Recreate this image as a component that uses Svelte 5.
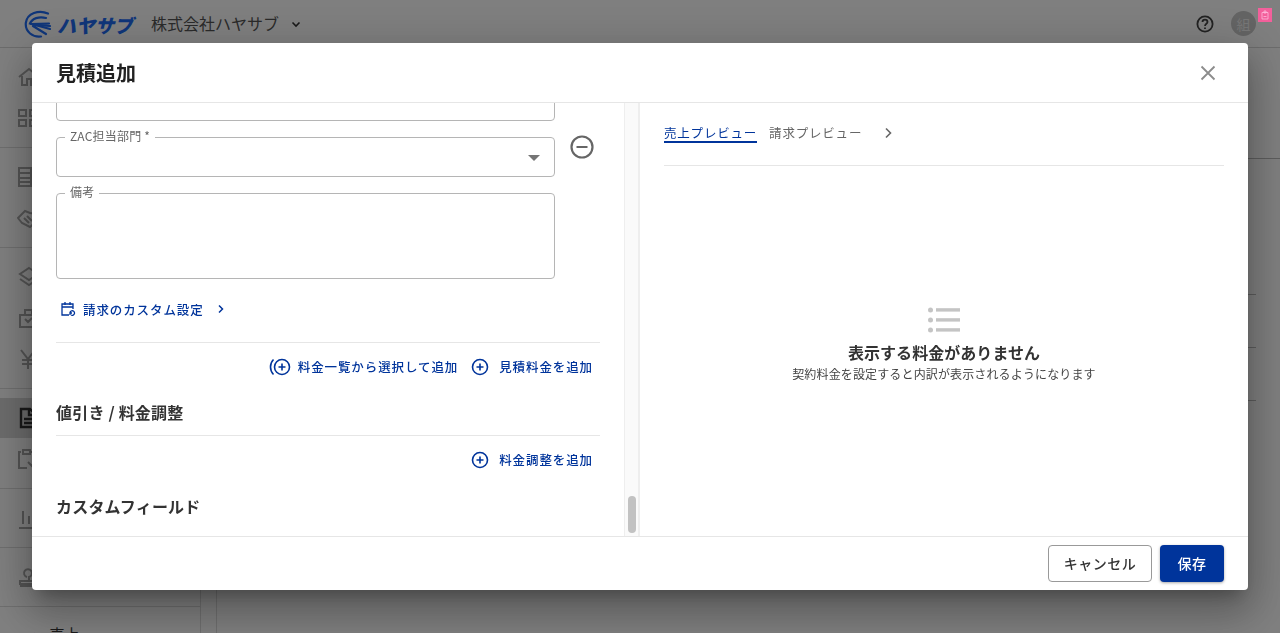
<script>
  let nav_groups = [
    ['home', 'grid'],
    ['building', 'hands'],
    ['layers', 'bag', 'yen'],
    ['doc', 'clip'],
    ['chart'],
    ['stamp'],
  ];
</script>

<div class="page">
  <header class="topbar">
    <div class="logo">
      <svg width="27" height="28" viewBox="0 0 27 28" fill="none" stroke="#1f6cf5" stroke-width="2.200" stroke-linecap="round">
        <path d="M24 3.500C15 -0.500 3 3 1.800 13C1 22 9 27.500 17 26.500"/>
        <path d="M22 8C15 6 8 8.500 6 13.500L26 19"/>
        <path d="M7 14L25 13.500M9 16L22 24M11 15L26 16"/>
      </svg>
      <span class="logo-name">ハヤサブ</span>
    </div>
    <span class="company">株式会社ハヤサブ</span>
    <svg class="caret" width="12" height="12" viewBox="0 0 12 12" fill="none" stroke="#333" stroke-width="1.600"><path d="M2.500 4.500L6 8l3.500-3.500"/></svg>
    <span class="spacer"></span>
    <svg width="20" height="20" viewBox="0 0 20 20" fill="none" stroke="#444" stroke-width="1.800">
      <circle cx="10" cy="10" r="7.600"/>
      <path d="M7.500 8C7.500 4.800 12.500 4.800 12.500 8C12.500 9.800 10 9.800 10 12"/>
      <path d="M10 13.500v1.500"/>
    </svg>
    <span class="avatar">組</span>
  </header>

  <div class="under">
    <aside class="side">
      {#each nav_groups as group}
        <div class="group">
          {#each group as item}
            <div class="nav" class:on={item === 'doc'}>
              <svg width="24" height="24" viewBox="0 0 24 24" fill="none" stroke="#a8a8a8" stroke-width="2">
                {#if item === 'home'}<path d="M2 12L12 4l10 8M5 11v9h5v-6h4v6h5v-9"/>
                {:else if item === 'grid'}<path d="M2 4h7v6H2zM13 4h7v6h-7zM2 14h7v6H2zM13 14h7v6h-7z"/>
                {:else if item === 'building'}<path d="M2 3h12v18H2zM14 9h7v12h-7zM2 8h12M2 13h12M2 17h12"/>
                {:else if item === 'hands'}<path d="M1 12l7-7 5 2 7 1v7l-7 6-8-4zM7 12l5 5M10 10l5 5"/>
                {:else if item === 'layers'}<path d="M12 3l9 6-9 6-9-6zM3 14l9 6 9-6"/>
                {:else if item === 'bag'}<path d="M3 9h17v12H3zM8 9V4h7v5M8 13l3 3 4-4"/>
                {:else if item === 'yen'}<path d="M4 3l7 9 7-9M11 12v10M5 13h12M5 17h12"/>
                {:else if item === 'doc'}<path stroke="#333" stroke-width="2.400" d="M4 3h9l5 5v13H4zM12 3v6h6M7 13h9M7 17h9"/>
                {:else if item === 'clip'}<path d="M4 5H2v16h8M14 5h3v8M6 3h7v4H6zM11 15l4 4 4-4"/>
                {:else if item === 'chart'}<path d="M2 22h18M6 18V5M12 18v-8M18 18v-5"/>
                {:else}<path d="M3 21h18M3 16h18v3H3zM12 15v-3a4 4 0 1 0-2 0"/>
                {/if}
              </svg>
            </div>
          {/each}
        </div>
      {/each}
      <div class="nav-label"><span class="tri">›</span>売上</div>
    </aside>
    <main class="content">
      <div class="content-head"></div>
      <div class="content-rows">
        <div class="row"></div>
        <div class="row"></div>
        <div class="row"></div>
      </div>
    </main>
  </div>
</div>

<div class="overlay"></div>
<span class="badge">
  <svg width="10" height="10" viewBox="0 0 10 10" fill="none" stroke="#fbd" stroke-width=".8"><path d="M2 2.500h6V9H2zM4 1h2v2H4zM3.500 6.500h3"/></svg>
</span>

<div class="modal-wrap">
  <section class="modal">
    <div class="modal-head">
      <h1>見積追加</h1>
      <button class="close" aria-label="閉じる">
        <svg width="16" height="16" viewBox="0 0 16 16" fill="none" stroke="#8c8c8c" stroke-width="1.800"><path d="M1.500 1.500l13 13M14.500 1.500l-13 13"/></svg>
      </button>
    </div>

    <div class="modal-body">
      <div class="left">
        <div class="form">
          <div class="field cut"></div>

          <div class="with-remove">
            <div class="field select">
              <span class="label">ZAC担当部門 *</span>
              <span class="arrow"></span>
            </div>
            <svg class="remove" width="26" height="26" viewBox="0 0 26 26" fill="none" stroke="#666" stroke-width="2.200">
              <circle cx="13" cy="13" r="10.500"/><path d="M7.500 13h11"/>
            </svg>
          </div>

          <div class="field memo"><span class="label">備考</span></div>

          <div class="custom">
            <svg width="16" height="16" viewBox="0 0 16 16" fill="none" stroke="#00349b" stroke-width="1.300">
              <path d="M9 14H2V3h11v5M2 6h11M5 1v3M10 1v3"/>
              <path d="M10 11.500a2.300 2.300 0 1 1 1 2.500M10 14v-2h2"/>
            </svg>
            <span>請求のカスタム設定</span>
            <svg class="chev" width="10" height="10" viewBox="0 0 10 10" fill="none" stroke="#00349b" stroke-width="1.500"><path d="M3 1.500L6.500 5 3 8.500"/></svg>
          </div>

          <div class="actions first">
            <span class="act list">
              <svg width="22" height="18" viewBox="0 0 22 18" fill="none" stroke="#00349b" stroke-width="1.600">
                <path d="M4.500 1.500C0.500 5.500 0.500 12.500 4.500 16.500"/>
                <circle cx="13" cy="9" r="7.500"/><path d="M13 5.500v7M9.500 9h7"/>
              </svg>
              料金一覧から選択して追加
            </span>
            <span class="act">
              <svg width="18" height="18" viewBox="0 0 18 18" fill="none" stroke="#00349b" stroke-width="1.600">
                <circle cx="9" cy="9" r="7.500"/><path d="M9 5.500v7M5.500 9h7"/>
              </svg>
              見積料金を追加
            </span>
          </div>

          <h2 class="sect">値引き / 料金調整</h2>
          <div class="actions">
            <span class="act">
              <svg width="18" height="18" viewBox="0 0 18 18" fill="none" stroke="#00349b" stroke-width="1.600">
                <circle cx="9" cy="9" r="7.500"/><path d="M9 5.500v7M5.500 9h7"/>
              </svg>
              料金調整を追加
            </span>
          </div>

          <h2 class="sect last">カスタムフィールド</h2>
        </div>
      </div>

      <div class="track"><span class="thumb"></span></div>

      <div class="right">
        <nav class="tabs">
          <span class="tab active">売上プレビュー</span>
          <span class="tab">請求プレビュー</span>
          <svg class="tab-next" width="12" height="12" viewBox="0 0 12 12" fill="none" stroke="#666" stroke-width="1.600"><path d="M4 1.500L8.500 6 4 10.500"/></svg>
        </nav>
        <div class="empty">
          <svg width="32" height="26" viewBox="0 0 32 26" fill="#c4c4c4">
            <circle cx="2.500" cy="3" r="2.500"/><circle cx="2.500" cy="13" r="2.500"/><circle cx="2.500" cy="23" r="2.500"/>
            <rect x="8" y="1.200" width="24" height="3.400"/><rect x="8" y="11.200" width="24" height="3.400"/><rect x="8" y="21.200" width="24" height="3.400"/>
          </svg>
          <strong>表示する料金がありません</strong>
          <p>契約料金を設定すると内訳が表示されるようになります</p>
        </div>
      </div>
    </div>

    <div class="modal-foot">
      <button class="btn cancel">キャンセル</button>
      <button class="btn save">保存</button>
    </div>
  </section>
</div>

<style>
  :global(body) {
    margin: 0;
    font-family: "Noto Sans CJK JP", "Liberation Sans", sans-serif;
    color: #333;
    overflow: hidden;
  }

  .page { height: 633px; overflow: hidden; background: #fff; isolation: isolate; }

  .topbar {
    height: 47px;
    display: flex;
    align-items: center;
    padding: 0 8px 0 24px;
    border-bottom: 1px solid #d8d8d8;
    box-sizing: content-box;
  }
  .logo { display: flex; align-items: center; width: 127px; margin-top: 1px; }
  .logo-name {
    font-size: 19px;
    font-weight: 900;
    font-style: italic;
    color: #1f6cf5;
    margin-left: 6px;
    white-space: nowrap;
  }
  .company { font-size: 16px; color: #555; white-space: nowrap; margin-bottom: 2px; }
  .caret { margin-left: 11px; }
  .spacer { flex: 1; }
  .avatar {
    width: 25px; height: 25px;
    margin-left: 16px;
    margin-right: 16px;
    border-radius: 50%;
    background: #c8c8c8;
    color: #eee;
    font-size: 14px;
    display: flex; align-items: center; justify-content: center;
  }

  .under { display: flex; height: 585px; }
  .side { width: 200px; border-right: 1px solid #ddd; flex: none; }
  .group { padding: 17px 0 17px 17px; border-bottom: 1px solid #ddd; display: flex; flex-direction: column; gap: 17px; }
  .nav { height: 24px; display: flex; align-items: center; position: relative; }
  .nav.on::before {
    content: "";
    position: absolute;
    left: -17px; right: 0; top: -8px; bottom: -8px;
    background: #d8d8d8;
    z-index: -1;
  }
  .nav-label { padding: 17px 0 0 33px; font-size: 15px; line-height: 20px; display: flex; gap: 12px; }
  .tri { color: #666; }

  .content { flex: 1; margin-left: 15px; border-left: 1px solid #ddd; }
  .content-head { height: 110px; border-bottom: 1px solid #bbb; }
  .content-rows { padding: 135px 24px 0 0; display: flex; flex-direction: column; gap: 52px; }
  .row { height: 1px; background: #bbb; }

  .overlay { position: fixed; inset: 0; background: rgba(0, 0, 0, .5); }

  .badge {
    position: fixed;
    left: 1258px; top: 8px;
    width: 14px; height: 14px;
    background: #f4609c;
    display: flex; align-items: center; justify-content: center;
  }

  .modal-wrap {
    position: fixed;
    inset: 43px 32px;
    display: flex;
  }
  .modal {
    flex: 1;
    background: #fff;
    border-radius: 4px;
    display: flex;
    flex-direction: column;
    overflow: hidden;
    box-shadow: 0 11px 15px -7px rgba(0,0,0,.25), 0 24px 38px 3px rgba(0,0,0,.18), 0 9px 46px 8px rgba(0,0,0,.16);
  }

  .modal-head {
    height: 59px;
    flex: none;
    display: flex;
    align-items: center;
    justify-content: space-between;
    padding: 0 32px 0 24px;
    border-bottom: 1px solid #e6e6e6;
  }
  h1 { margin: 0; font-size: 20px; font-weight: 700; color: #222; line-height: 1; }
  .close { border: 0; background: none; padding: 0; width: 16px; height: 16px; display: flex; }

  .modal-body { flex: 1; display: flex; min-height: 0; }

  .left { width: 592px; flex: none; overflow: hidden; }
  .form { padding: 0 24px; }

  .field {
    position: relative;
    box-sizing: border-box;
    width: 499px;
    border: 1px solid #b5b5b5;
    border-radius: 4px;
    background: #fff;
  }
  .field.cut { height: 40px; margin-top: -22px; }
  .field.select { height: 40px; }
  .field.memo { height: 86px; margin-top: 16px; }
  .label {
    position: absolute;
    left: 8px; top: -9px;
    padding: 0 5px;
    background: #fff;
    font-size: 12px;
    line-height: 14px;
    letter-spacing: .2px;
    color: #666;
    white-space: nowrap;
  }
  .arrow {
    position: absolute;
    right: 14px; top: 17px;
    border: 6px solid transparent;
    border-top: 6px solid #757575;
    border-bottom: 0;
  }

  .with-remove { display: flex; align-items: flex-start; margin-top: 16px; }
  .remove { margin: -3px 0 0 14px; flex: none; }

  .custom {
    display: flex;
    align-items: center;
    height: 20px;
    margin-top: 20px;
    padding-left: 4px;
    font-size: 12.500px;
    font-weight: 500;
    letter-spacing: .9px;
    color: #00349b;
  }
  .custom span { margin-left: 7px; }
  .chev { margin-left: 12px; }

  .actions {
    display: flex;
    justify-content: flex-end;
    gap: 13px;
    padding: 14px 7px 0 0;
    height: 20px;
  }
  .actions.first {
    margin-top: 23px;
    border-top: 1px solid #e6e6e6;
  }
  .act {
    display: flex;
    align-items: center;
    gap: 10px;
    font-size: 12.500px;
    font-weight: 500;
    letter-spacing: .9px;
    color: #00349b;
    white-space: nowrap;
    line-height: 20px;
  }
  .act.list { gap: 7px; }

  .sect {
    margin: 24px 0 0;
    font-size: 16px;
    font-weight: 700;
    line-height: 22px;
    letter-spacing: .2px;
    color: #333;
    padding-bottom: 12px;
    border-bottom: 1px solid #e6e6e6;
  }
  .sect.last { border-bottom: 0; margin-top: 25px; }

  .track {
    width: 13px;
    flex: none;
    background: #fafafa;
    border-left: 1px solid #eee;
    border-right: 2px solid #eee;
    display: flex;
    flex-direction: column;
    justify-content: flex-end;
    align-items: center;
    padding-bottom: 3px;
    box-sizing: content-box;
  }
  .thumb { width: 8px; height: 37px; border-radius: 4px; background: #c2c2c2; }

  .right { flex: 1; display: flex; flex-direction: column; padding: 0 24px; min-width: 0; }
  .tabs {
    height: 63px;
    flex: none;
    display: flex;
    align-items: flex-start;
    gap: 12px;
    padding-top: 21px;
    box-sizing: border-box;
    border-bottom: 1px solid #e6e6e6;
  }
  .tab {
    font-size: 12.500px;
    letter-spacing: .8px;
    line-height: 17px;
    color: #666;
    white-space: nowrap;
  }
  .tab.active { color: #00349b; border-bottom: 2px solid #00349b; }
  .tab-next { margin: 3px 0 0 8px; }

  .empty {
    flex: 1;
    display: flex;
    flex-direction: column;
    align-items: center;
    justify-content: center;
    padding-bottom: 12px;
  }
  .empty strong { font-size: 16px; font-weight: 700; line-height: 22px; margin-top: 8px; letter-spacing: .05px; color: #333; }
  .empty p { margin: 1px 0 0; font-size: 12px; line-height: 20px; letter-spacing: .14px; color: #444; white-space: nowrap; }

  .modal-foot {
    height: 54px;
    flex: none;
    box-sizing: border-box;
    border-top: 1px solid #e6e6e6;
    display: flex;
    justify-content: flex-end;
    align-items: flex-start;
    gap: 8px;
    padding: 8px 24px 0;
  }
  .btn {
    height: 37px;
    border-radius: 4px;
    font-family: inherit;
    font-size: 14px;
    font-weight: 500;
    letter-spacing: .5px;
    padding: 0 0 1px;
  }
  .cancel { width: 104px; background: #fff; border: 1px solid #999; color: #333; }
  .save {
    width: 64px;
    background: #00349b;
    border: 0;
    color: #fff;
    box-shadow: 0 1px 3px rgba(0,0,0,.35);
  }
</style>
